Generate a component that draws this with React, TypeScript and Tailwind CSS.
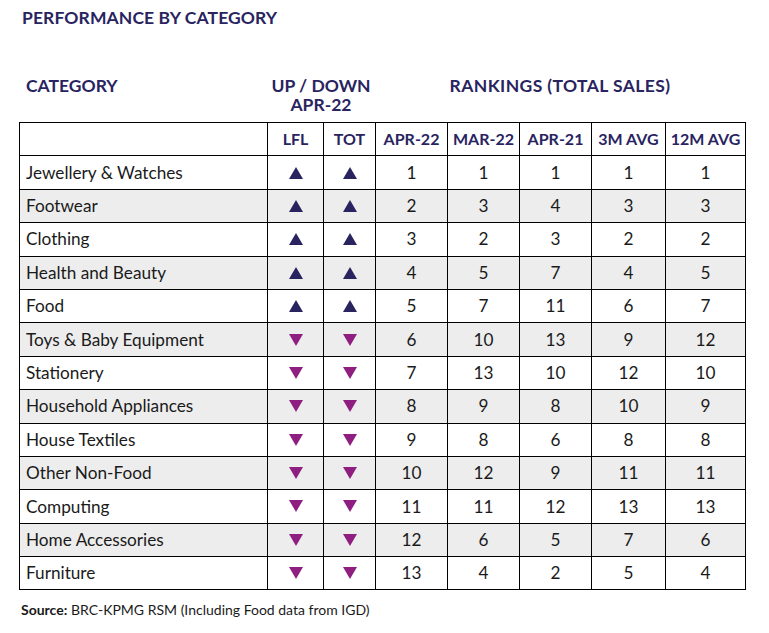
import React from 'react';

type Row = {
  name: string;
  up: boolean;
  ranks: number[];
};

const rows: Row[] = [
  { name: 'Jewellery & Watches', up: true, ranks: [1, 1, 1, 1, 1] },
  { name: 'Footwear', up: true, ranks: [2, 3, 4, 3, 3] },
  { name: 'Clothing', up: true, ranks: [3, 2, 3, 2, 2] },
  { name: 'Health and Beauty', up: true, ranks: [4, 5, 7, 4, 5] },
  { name: 'Food', up: true, ranks: [5, 7, 11, 6, 7] },
  { name: 'Toys & Baby Equipment', up: false, ranks: [6, 10, 13, 9, 12] },
  { name: 'Stationery', up: false, ranks: [7, 13, 10, 12, 10] },
  { name: 'Household Appliances', up: false, ranks: [8, 9, 8, 10, 9] },
  { name: 'House Textiles', up: false, ranks: [9, 8, 6, 8, 8] },
  { name: 'Other Non-Food', up: false, ranks: [10, 12, 9, 11, 11] },
  { name: 'Computing', up: false, ranks: [11, 11, 12, 13, 13] },
  { name: 'Home Accessories', up: false, ranks: [12, 6, 5, 7, 6] },
  { name: 'Furniture', up: false, ranks: [13, 4, 2, 5, 4] },
];

const rankCols = ['APR-22', 'MAR-22', 'APR-21', '3M AVG', '12M AVG'];

function Arrow({ up }: { up: boolean }) {
  return (
    <svg width="14" height="12" viewBox="0 0 14 12" className="mx-auto block">
      {up ? (
        <polygon points="7,0 14,12 0,12" fill="#29245f" />
      ) : (
        <polygon points="0,0 14,0 7,12" fill="#8e1f80" />
      )}
    </svg>
  );
}

export default function App() {
  const heading = "font-['Lato',sans-serif] font-bold text-[#29245f]";

  return (
    <div className="w-[769px] h-[633px] bg-white relative font-['Lato',sans-serif] text-[#1a1a1a]">
      <div className="pl-[22px] pt-[8px]">
        <h1 className={`${heading} text-[17.5px] leading-[20px] tracking-[0.1px]`}>PERFORMANCE BY CATEGORY</h1>
      </div>

      <div className="pl-[19px] mt-[48px] grid grid-cols-[248px_108px_370px]">
        <div className={`${heading} text-[17.5px] leading-[19px] pl-[7px]`}>CATEGORY</div>
        <div className={`${heading} text-[17.5px] leading-[19px] text-center`}>
          UP / DOWN
          <br />
          APR-22
        </div>
        <div className={`${heading} text-[17.5px] leading-[19px] tracking-[0.4px] text-center`}>
          RANKINGS (TOTAL SALES)
        </div>
      </div>

      <table className="ml-[19px] mt-[8px] table-fixed border-collapse w-[726px]">
        <colgroup>
          <col className="w-[248px]" />
          <col className="w-[56px]" />
          <col className="w-[52px]" />
          <col className="w-[72px]" />
          <col className="w-[72px]" />
          <col className="w-[72px]" />
          <col className="w-[74px]" />
          <col className="w-[80px]" />
        </colgroup>
        <thead>
          <tr className="h-[33.4px]">
            <th className="border border-black" />
            <th className={`border border-black ${heading} text-[16px] text-center`}>LFL</th>
            <th className={`border border-black ${heading} text-[16px] text-center`}>TOT</th>
            {rankCols.map((c) => (
              <th key={c} className={`border border-black ${heading} text-[16px] text-center whitespace-nowrap`}>
                {c}
              </th>
            ))}
          </tr>
        </thead>
        <tbody>
          {rows.map((r, i) => (
            <tr key={r.name} className={`h-[33.4px] ${i % 2 === 1 ? 'bg-[#ededed]' : 'bg-white'}`}>
              <td className="border border-black pl-[6px] text-[17.2px]">{r.name}</td>
              <td className="border border-black">
                <Arrow up={r.up} />
              </td>
              <td className="border border-black">
                <Arrow up={r.up} />
              </td>
              {r.ranks.map((n, j) => (
                <td key={j} className="border border-black text-center text-[17.2px]">
                  {n}
                </td>
              ))}
            </tr>
          ))}
        </tbody>
      </table>

      <p className="pl-[21px] mt-[9px] text-[14px] text-[#1a1a1a]">
        <span className="font-bold">Source:</span> BRC-KPMG RSM (Including Food data from IGD)
      </p>
    </div>
  );
}
